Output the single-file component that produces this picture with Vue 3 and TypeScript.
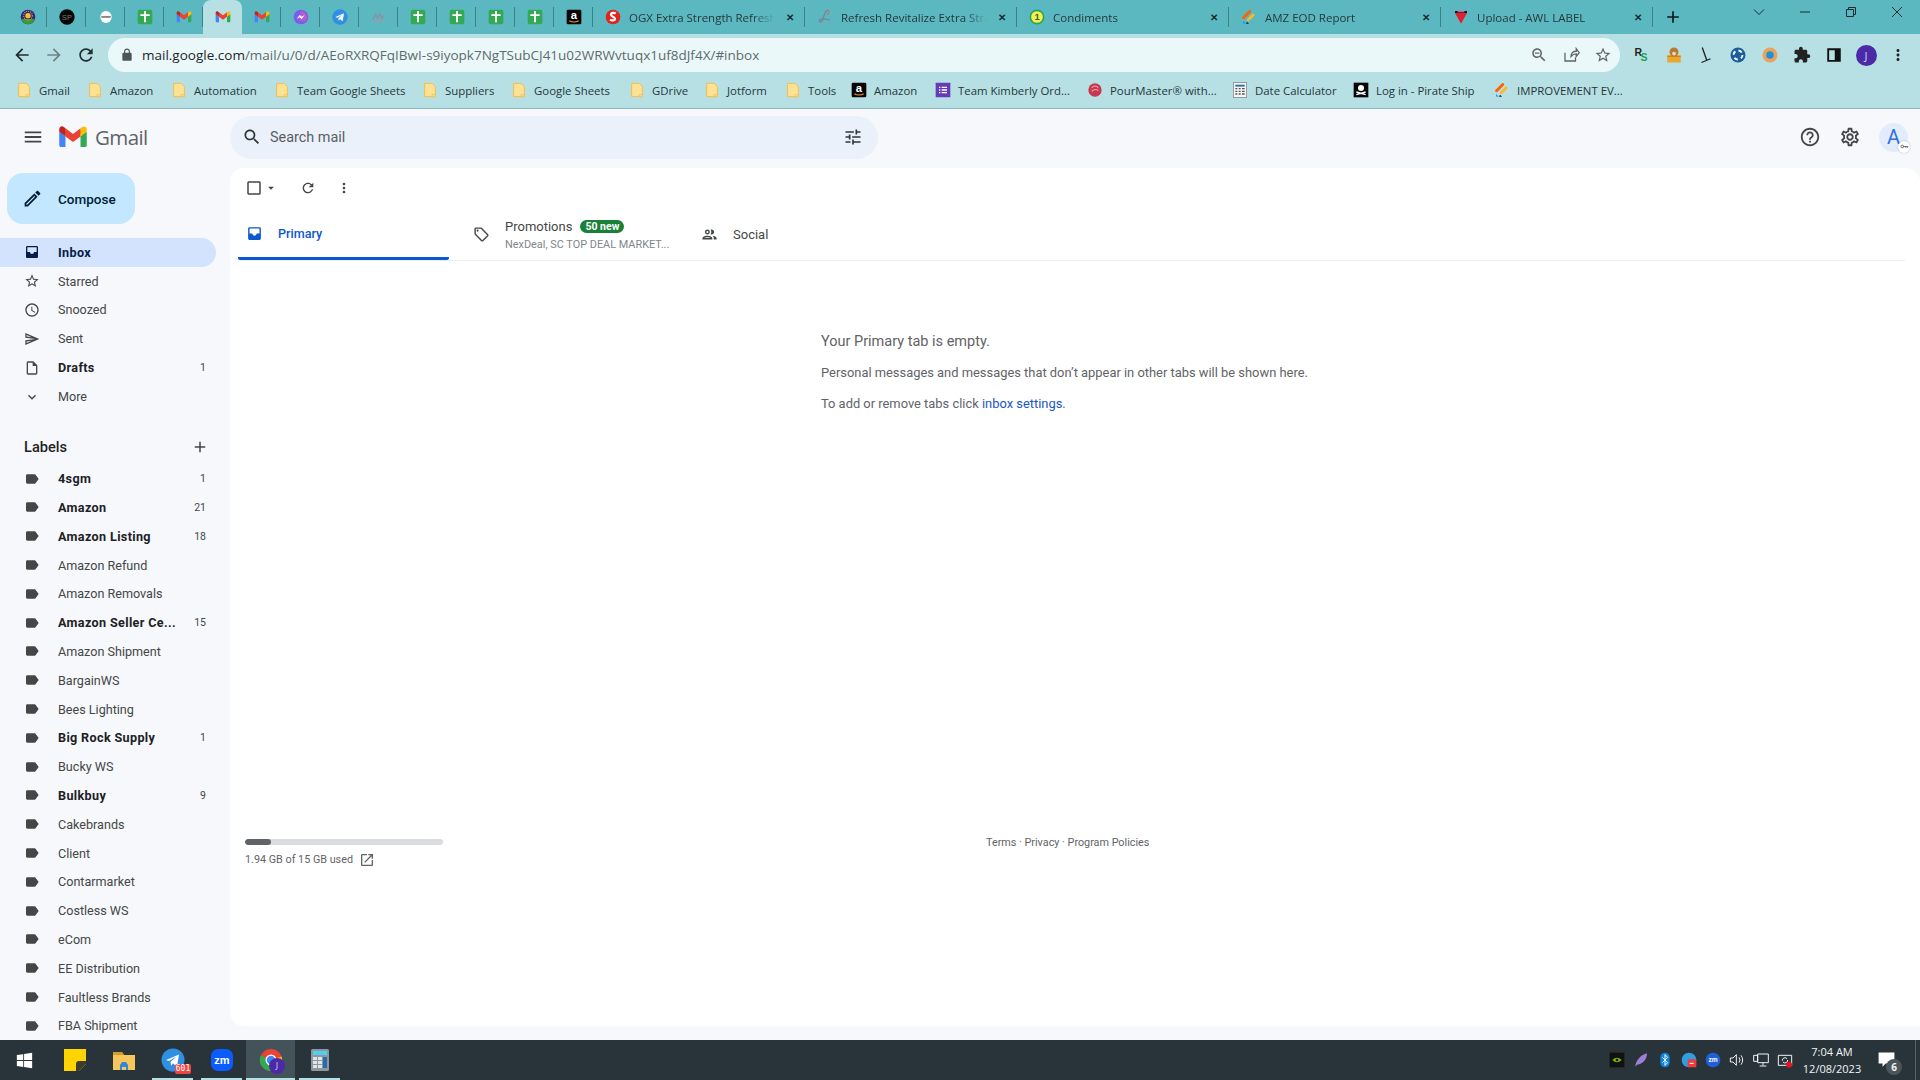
<script setup lang="ts">
const glyphs: Record<string, string> = {
  sheets: '<rect x="1" y="1" width="22" height="22" rx="3" fill="#34a853"/><path d="M5 8h14v2.4h-5.6V20h-2.8v-9.6H5z" fill="#fff"/><path d="M10.600 3h2.800v6h-2.800z" fill="#fff"/>',
  gmail: '<g transform="translate(1 3.500) scale(.086)"><path fill="#4285F4" d="M58.182 192.050V93.140L27.507 65.077 0 49.504v125.091c0 9.658 7.825 17.455 17.455 17.455h40.727Z"/><path fill="#34A853" d="M197.818 192.050h40.727c9.659 0 17.455-7.826 17.455-17.455V49.505l-31.156 17.837-27.026 25.798v98.910Z"/><path fill="#EA4335" d="m58.182 93.140-4.174-38.647 4.174-36.989L128 69.868l69.818-52.364 4.669 34.992-4.669 40.644L128 145.504z"/><path fill="#FBBC04" d="M197.818 17.504V93.140L256 49.504V26.231c0-21.585-24.640-33.890-41.890-20.945l-16.292 12.218Z"/><path fill="#C5221F" d="m0 49.504 26.759 20.070L58.182 93.140V17.504L41.890 5.286C24.610-7.660 0 4.646 0 26.230v23.273Z"/></g>',
  sun: '<circle cx="12" cy="12" r="11" fill="#2c2a7a"/><path d="M1.500 15a11 11 0 0 0 21 0z" fill="#3d9a3a"/><circle cx="12" cy="10" r="4" fill="#f2c230"/><circle cx="12" cy="10" r="6.500" fill="none" stroke="#e8862e" stroke-dasharray="1.500 1.500" stroke-width="2"/>',
  sp: '<circle cx="12" cy="12" r="11.500" fill="#060606"/><text x="12" y="16" font-size="11" text-anchor="middle" fill="#777" font-family="Liberation Sans">SP</text>',
  pill: '<ellipse cx="12" cy="12" rx="8.500" ry="9" fill="#fff"/><rect x="5" y="10.800" width="14" height="2.200" fill="#666"/>',
  messenger: '<circle cx="12" cy="12" r="11" fill="#7a5cf0"/><path d="M12 3a9 9 0 0 1 9 9 9 9 0 0 1-4 7l-9-2z" fill="#e85ca8" opacity=".55"/><path d="M5.500 15l4.500-6 3 2.500 4.500-2.500-4.500 6-3-2.500z" fill="#fff"/>',
  telegram: '<circle cx="12" cy="12" r="11.500" fill="#2f8fe0"/><path d="M5 12l13-5.500-2 12-4-3-2 2-.5-3.500 6-5.500-7.500 4.500z" fill="#fff"/>',
  faint: '<path d="M3 16l4-8 3 6 3-7 3 8 4-6" fill="none" stroke="#8795ab" stroke-width="2.400"/><path d="M4 19h16" stroke="#c58a9a" stroke-width="1.500"/>',
  amazon: '<rect x="1" y="1" width="22" height="22" rx="2" fill="#060606"/><text x="12" y="15.500" font-size="17" font-weight="700" text-anchor="middle" fill="#fff" font-family="Liberation Sans">a</text><path d="M5 17.500q7 4 14 0" fill="none" stroke="#f59a23" stroke-width="1.800"/>',
  safeway: '<circle cx="12" cy="12" r="11" fill="#e2231a"/><path d="M16 7c-2-2-7-1.500-7 1.500s6 3 6 6-4.500 3.500-7.500 1.500" fill="none" stroke="#fff" stroke-width="3.400"/>',
  script: '<path d="M15 2c-4 3-5 11-7 15-1 3-5 3-4.500 0s9.500-3 15.500 0" fill="none" stroke="#76858e" stroke-width="2"/><path d="M15 2c3.500-1 3.500 5 0 7" fill="none" stroke="#b8736f" stroke-width="2"/><path d="M9 21h9" stroke="#6fb0b8" stroke-width="1.600"/>',
  one: '<circle cx="12" cy="12" r="10" fill="#f8ee4d" stroke="#1fa85a" stroke-width="2.400"/><text x="12" y="17" font-size="14" font-weight="700" text-anchor="middle" fill="#236b35" font-family="Liberation Sans">1</text>',
  jot: '<path d="M2 12L12 2c1.500-1.500 4.500 1.500 3 3L5 15c-1.500 1.500-4.500-1.500-3-3z" fill="#ff6100"/><path d="M9 15l8-8c1.500-1.500 4.500 1.500 3 3l-8 8c-1.500 1.500-4.500-1.500-3-3z" fill="#ffb629"/><path d="M3 18l4 4H4.500C3.500 22 3 21 3 20z" fill="#0099ff"/><path d="M9 19l3 3H7.500z" fill="#0a1551"/>',
  awl: '<path d="M3 6h18l-9 16z" fill="#e0202c"/><path d="M3 3h18v3H3z" fill="#1a1a1a"/><path d="M7 3h10v2H7z" fill="#e84fa0"/>',
  folder: '<path d="M4 2h11l5 5v15H4z" fill="#fde293" stroke="#f0bd4f" stroke-width="1.500"/><path d="M15 19h5v3h-5z" fill="#fde293" stroke="#f0bd4f"/>',
  form: '<rect x="1" y="1" width="22" height="22" rx="1" fill="#673ab7"/><path d="M6 7h2v2H6zM10 7h8v2h-8zM6 11h2v2H6zM10 11h8v2h-8zM6 15h2v2H6zM10 15h8v2h-8z" fill="#fff"/>',
  pour: '<circle cx="12" cy="12" r="10" fill="#c8374f"/><path d="M7 9q5-6 10 0M7 14q5-5 10-1" fill="none" stroke="#f1a3ae" stroke-width="1.600"/>',
  calc: '<rect x="2" y="1" width="20" height="22" fill="#f5f5f5" stroke="#777"/><path d="M5 4h14v3H5z" fill="#3a6ea5"/><path d="M5 9h3v2H5zM10 9h3v2h-3zM15 9h4v2h-4zM5 13h3v2H5zM10 13h3v2h-3zM15 13h4v2h-4zM5 17h3v2H5zM10 17h3v2h-3zM15 17h4v2h-4z" fill="#555"/>',
  pirate: '<rect x="1" y="1" width="22" height="22" fill="#050505"/><circle cx="12" cy="9" r="4.500" fill="#fff"/><path d="M5 15l14 4M19 15L5 19" stroke="#fff" stroke-width="2"/>'
}

const pinned = ['sun', 'sp', 'pill', 'sheets', 'gmail', 'gmail', 'gmail', 'messenger', 'telegram', 'faint', 'sheets', 'sheets', 'sheets', 'sheets', 'amazon']
const openTabs = [
  { title: 'OGX Extra Strength Refresh', icon: 'safeway' },
  { title: 'Refresh Revitalize Extra Stre', icon: 'script' },
  { title: 'Condiments', icon: 'one' },
  { title: 'AMZ EOD Report', icon: 'jot' },
  { title: 'Upload - AWL LABEL', icon: 'awl' }
]
const bookmarks = [
  { text: 'Gmail', icon: 'folder', w: 71 },
  { text: 'Amazon', icon: 'folder', w: 84 },
  { text: 'Automation', icon: 'folder', w: 103 },
  { text: 'Team Google Sheets', icon: 'folder', w: 148 },
  { text: 'Suppliers', icon: 'folder', w: 89 },
  { text: 'Google Sheets', icon: 'folder', w: 118 },
  { text: 'GDrive', icon: 'folder', w: 75 },
  { text: 'Jotform', icon: 'folder', w: 81 },
  { text: 'Tools', icon: 'folder', w: 66 },
  { text: 'Amazon', icon: 'amazon', w: 84 },
  { text: 'Team Kimberly Ord...', icon: 'form', w: 152 },
  { text: 'PourMaster® with...', icon: 'pour', w: 145 },
  { text: 'Date Calculator', icon: 'calc', w: 121 },
  { text: 'Log in - Pirate Ship', icon: 'pirate', w: 141 },
  { text: 'IMPROVEMENT EV...', icon: 'jot', w: 160 }
]

const paths = {
  menu: 'M3 18h18v-2H3v2zm0-5h18v-2H3v2zm0-7v2h18V6H3z',
  search: 'M15.500 14h-.79l-.28-.27C15.410 12.590 16 11.110 16 9.500 16 5.910 13.090 3 9.500 3S3 5.910 3 9.500 5.910 16 9.500 16c1.610 0 3.090-.59 4.230-1.570l.27.28v.79l5 4.990L20.490 19l-4.990-5zm-6 0C7.010 14 5 11.990 5 9.500S7.010 5 9.500 5 14 7.010 14 9.500 11.990 14 9.500 14z',
  tune: 'M3 17v2h6v-2H3zM3 5v2h10V5H3zm10 16v-2h8v-2h-8v-2h-2v6h2zM7 9v2H3v2h4v2h2V9H7zm14 4v-2H11v2h10zm-6-4h2V7h4V5h-4V3h-2v6z',
  help: 'M11 18h2v-2h-2v2zm1-16C6.480 2 2 6.480 2 12s4.480 10 10 10 10-4.480 10-10S17.520 2 12 2zm0 18c-4.410 0-8-3.590-8-8s3.590-8 8-8 8 3.590 8 8-3.590 8-8 8zm0-14c-2.210 0-4 1.790-4 4h2c0-1.100.9-2 2-2s2 .9 2 2c0 2-3 1.750-3 5h2c0-2.250 3-2.500 3-5 0-2.210-1.790-4-4-4z',
  gear: 'M19.430 12.980c.04-.32.07-.64.07-.98 0-.34-.03-.66-.07-.98l2.110-1.650c.19-.15.24-.42.12-.64l-2-3.460c-.09-.16-.26-.25-.44-.25-.06 0-.12.01-.17.03l-2.490 1c-.52-.4-1.080-.73-1.690-.98l-.38-2.650C14.460 2.180 14.250 2 14 2h-4c-.25 0-.46.18-.49.42l-.38 2.650c-.61.25-1.170.59-1.690.98l-2.490-1c-.06-.02-.12-.03-.18-.03-.17 0-.34.09-.43.25l-2 3.460c-.13.22-.07.49.12.64l2.110 1.650c-.04.32-.07.65-.07.98 0 .33.03.66.07.98l-2.110 1.650c-.19.15-.24.42-.12.64l2 3.460c.09.16.26.25.44.25.06 0 .12-.01.17-.03l2.490-1c.52.4 1.080.73 1.690.98l.38 2.650c.03.24.24.42.49.42h4c.25 0 .46-.18.49-.42l.38-2.650c.61-.25 1.170-.59 1.690-.98l2.490 1c.06.02.12.03.18.03.17 0 .34-.09.43-.25l2-3.460c.12-.22.07-.49-.12-.64l-2.110-1.650zm-1.980-1.710c.04.31.05.52.05.73 0 .21-.02.43-.05.73l-.14 1.130.89.7 1.080.84-.7 1.210-1.270-.51-1.040-.42-.9.68c-.43.32-.84.56-1.250.73l-1.060.43-.16 1.130-.2 1.350h-1.400l-.19-1.350-.16-1.130-1.060-.43c-.43-.18-.83-.41-1.230-.71l-.91-.7-1.060.43-1.270.51-.7-1.210 1.080-.84.89-.7-.14-1.130c-.03-.31-.05-.54-.05-.74s.02-.43.05-.73l.14-1.130-.89-.7-1.080-.84.7-1.210 1.270.51 1.040.42.9-.68c.43-.32.84-.56 1.250-.73l1.060-.43.16-1.130.2-1.350h1.390l.19 1.350.16 1.130 1.060.43c.43.18.83.41 1.230.71l.91.7 1.060-.43 1.270-.51.7 1.210-1.070.85-.89.7.14 1.130zM12 8c-2.210 0-4 1.790-4 4s1.790 4 4 4 4-1.790 4-4-1.790-4-4-4zm0 6c-1.100 0-2-.9-2-2s.9-2 2-2 2 .9 2 2-.9 2-2 2z',
  edit: 'M3 17.250V21h3.750L17.810 9.940l-3.750-3.750L3 17.250zM5.920 19H5v-.92l9.060-9.060.92.92L5.920 19zM20.710 5.630l-2.340-2.340c-.2-.2-.45-.29-.71-.29s-.51.1-.7.29l-1.830 1.830 3.750 3.750 1.830-1.830c.39-.39.39-1.020 0-1.410z',
  inbox: 'M19 3H5c-1.100 0-2 .9-2 2v14c0 1.100.9 2 2 2h14c1.100 0 2-.9 2-2V5c0-1.100-.9-2-2-2zm0 9h-4c0 1.660-1.340 3-3 3s-3-1.340-3-3H5V5h14v7z',
  star: 'M22 9.240l-7.190-.62L12 2 9.190 8.630 2 9.240l5.460 4.730L5.820 21 12 17.270 18.180 21l-1.630-7.030L22 9.240zM12 15.400l-3.760 2.270 1-4.280-3.320-2.880 4.380-.38L12 6.100l1.710 4.040 4.380.38-3.320 2.880 1 4.280L12 15.400z',
  clock: 'M11.990 2C6.470 2 2 6.480 2 12s4.470 10 9.990 10C17.520 22 22 17.520 22 12S17.520 2 11.990 2zM12 20c-4.420 0-8-3.580-8-8s3.580-8 8-8 8 3.580 8 8-3.580 8-8 8zm.5-13H11v6l5.250 3.150.75-1.230-4.500-2.670z',
  send: 'M4.010 6.030l7.510 3.220-7.520-1 .01-2.220m7.500 8.720L4 17.970v-2.220l7.510-1M2.010 3L2 10l15 2-15 2 .01 7L23 12 2.010 3z',
  draft: 'M14 2H6c-1.100 0-1.990.9-1.990 2L4 20c0 1.100.89 2 1.990 2H18c1.100 0 2-.9 2-2V8l-6-6zM6 20V4h7v5h5v11H6z',
  down: 'M16.590 8.590L12 13.170 7.410 8.590 6 10l6 6 6-6z',
  add: 'M19 13h-6v6h-2v-6H5v-2h6V5h2v6h6v2z',
  label: 'M17.630 5.840C17.270 5.330 16.670 5 16 5L5 5.010C3.900 5.010 3 5.900 3 7v10c0 1.100.9 1.990 2 1.990L16 19c.67 0 1.270-.33 1.630-.84L22 12l-4.370-6.160z',
  box: 'M19 5v14H5V5h14m0-2H5c-1.100 0-2 .9-2 2v14c0 1.100.9 2 2 2h14c1.100 0 2-.9 2-2V5c0-1.100-.9-2-2-2z',
  caret: 'M7 10l5 5 5-5z',
  refresh: 'M17.650 6.350C16.200 4.900 14.210 4 12 4c-4.420 0-7.990 3.580-7.990 8s3.570 8 7.990 8c3.730 0 6.840-2.550 7.730-6h-2.080c-.82 2.330-3.040 4-5.650 4-3.310 0-6-2.690-6-6s2.690-6 6-6c1.660 0 3.140.69 4.220 1.780L13 11h7V4l-2.350 2.350z',
  more: 'M12 8c1.100 0 2-.9 2-2s-.9-2-2-2-2 .9-2 2 .9 2 2 2zm0 2c-1.100 0-2 .9-2 2s.9 2 2 2 2-.9 2-2-.9-2-2-2zm0 6c-1.100 0-2 .9-2 2s.9 2 2 2 2-.9 2-2-.9-2-2-2z',
  tag: 'M21.410 11.580l-9-9C12.050 2.220 11.550 2 11 2H4c-1.100 0-2 .9-2 2v7c0 .55.22 1.050.59 1.420l9 9c.36.36.86.58 1.410.58s1.050-.22 1.410-.59l7-7c.37-.36.59-.86.59-1.410s-.23-1.060-.59-1.420zM13 20.010L4 11V4h7v-.01l9 9-7 7.020zM6.500 5a1.500 1.500 0 1 0 0 3 1.500 1.500 0 0 0 0-3z',
  people: 'M9 13.750c-2.340 0-7 1.170-7 3.500V19h14v-1.750c0-2.330-4.660-3.500-7-3.500zM4.340 17c.84-.58 2.870-1.250 4.660-1.250s3.820.67 4.660 1.250H4.340zM9 12c1.930 0 3.500-1.570 3.500-3.500S10.930 5 9 5 5.500 6.570 5.500 8.500 7.070 12 9 12zm0-5c.83 0 1.500.67 1.500 1.500S9.830 10 9 10s-1.500-.67-1.500-1.500S8.170 7 9 7zm7.040 6.810c1.160.84 1.960 1.960 1.960 3.440V19h4v-1.750c0-2.020-3.500-3.170-5.960-3.440zM15 12c1.930 0 3.500-1.570 3.500-3.500S16.930 5 15 5c-.54 0-1.040.13-1.500.35.63.89 1 1.980 1 3.150s-.37 2.260-1 3.150c.46.22.96.35 1.500.35z',
  open: 'M19 19H5V5h7V3H5c-1.110 0-2 .9-2 2v14c0 1.100.89 2 2 2h14c1.100 0 2-.9 2-2v-7h-2v7zM14 3v2h3.590l-9.830 9.830 1.410 1.410L19 6.410V10h2V3h-7z',
  back: 'M20 11H7.830l5.590-5.590L12 4l-8 8 8 8 1.410-1.410L7.830 13H20v-2z',
  forward: 'M12 4l-1.410 1.410L16.170 11H4v2h12.170l-5.580 5.590L12 20l8-8z',
  lock: 'M18 8h-1V6c0-2.760-2.240-5-5-5S7 3.240 7 6v2H6c-1.100 0-2 .9-2 2v10c0 1.100.9 2 2 2h12c1.100 0 2-.9 2-2V10c0-1.100-.9-2-2-2zM9 6c0-1.660 1.340-3 3-3s3 1.340 3 3v2H9V6z',
  puzzle: 'M20.500 11H19V7c0-1.100-.9-2-2-2h-4V3.500C13 2.120 11.880 1 10.500 1S8 2.120 8 3.500V5H4c-1.100 0-1.990.9-1.990 2v3.800H3.500c1.490 0 2.700 1.210 2.700 2.700s-1.210 2.700-2.700 2.700H2V20c0 1.100.9 2 2 2h3.800v-1.500c0-1.490 1.210-2.700 2.700-2.700 1.490 0 2.700 1.210 2.700 2.700V22H17c1.100 0 2-.9 2-2v-4h1.500c1.380 0 2.500-1.120 2.500-2.500S21.880 11 20.500 11z'
}

const navItems = [
  { text: 'Inbox', icon: paths.inbox, active: true },
  { text: 'Starred', icon: paths.star },
  { text: 'Snoozed', icon: paths.clock },
  { text: 'Sent', icon: paths.send },
  { text: 'Drafts', icon: paths.draft, count: 1 },
  { text: 'More', icon: paths.down, muted: true }
]
const labels: { text: string; count?: number }[] = [
  { text: '4sgm', count: 1 },
  { text: 'Amazon', count: 21 },
  { text: 'Amazon Listing', count: 18 },
  { text: 'Amazon Refund' },
  { text: 'Amazon Removals' },
  { text: 'Amazon Seller Ce...', count: 15 },
  { text: 'Amazon Shipment' },
  { text: 'BargainWS' },
  { text: 'Bees Lighting' },
  { text: 'Big Rock Supply', count: 1 },
  { text: 'Bucky WS' },
  { text: 'Bulkbuy', count: 9 },
  { text: 'Cakebrands' },
  { text: 'Client' },
  { text: 'Contarmarket' },
  { text: 'Costless WS' },
  { text: 'eCom' },
  { text: 'EE Distribution' },
  { text: 'Faultless Brands' },
  { text: 'FBA Shipment' }
]
const storagePct = (1.94 / 15) * 100
</script>

<template>
  <div class="screen">
    <div class="tabstrip">
      <div v-for="(p, i) in pinned" :key="i" class="pin" :class="{ 'pin-on': i === 5 }">
        <svg class="fav" viewBox="0 0 24 24" v-html="glyphs[p]"></svg>
      </div>
      <div v-for="t in openTabs" :key="t.title" class="tab">
        <svg class="fav" viewBox="0 0 24 24" v-html="glyphs[t.icon]"></svg>
        <span class="tab-title">{{ t.title }}</span>
        <span class="tab-x">✕</span>
      </div>
      <svg class="newtab" viewBox="0 0 24 24"><path :d="paths.add" /></svg>
      <div class="winctl">
        <svg class="wc" viewBox="0 0 12 12"><path d="M1 3.500l5 5 5-5" /></svg>
        <svg class="wc" viewBox="0 0 12 12"><path d="M1 6h10" /></svg>
        <svg class="wc" viewBox="0 0 12 12"><path d="M1.500 3.500h7v7h-7zM3.500 3.500v-2h7v7h-2" /></svg>
        <svg class="wc" viewBox="0 0 12 12"><path d="M1 1l10 10M11 1L1 11" /></svg>
      </div>
    </div>

    <div class="toolbar">
      <button class="tb"><svg viewBox="0 0 24 24"><path :d="paths.back" /></svg></button>
      <button class="tb dim"><svg viewBox="0 0 24 24"><path :d="paths.forward" /></svg></button>
      <button class="tb"><svg viewBox="0 0 24 24"><path :d="paths.refresh" /></svg></button>
      <div class="omni">
        <svg class="lock" viewBox="0 0 24 24"><path :d="paths.lock" /></svg>
        <span class="url"><b>mail.google.com</b>/mail/u/0/d/AEoRXRQFqIBwI-s9iyopk7NgTSubCJ41u02WRWvtuqx1uf8dJf4X/#inbox</span>
        <svg class="omni-i" viewBox="0 0 24 24"><path :d="paths.search" /><path d="M6.500 8.700h6v1.600h-6z" /></svg>
        <svg class="omni-i" viewBox="0 0 24 24"><path d="M4 9v11h14v-5M12 14c0-5 3-7 7-7V3.500l4 5.500-4 5v-3.500c-3 0-5 1-7 3.500z" fill="none" stroke="#5f6368" stroke-width="1.700" /></svg>
        <svg class="omni-i" viewBox="0 0 24 24"><path :d="paths.star" /></svg>
      </div>
      <div class="exts">
        <span class="ext">
          <svg viewBox="0 0 24 24"><text x="2" y="13" font-size="14" font-weight="700" fill="#222" font-family="Liberation Sans">R</text><text x="10" y="20" font-size="14" font-weight="700" fill="#1e9e5a" font-family="Liberation Sans">S</text></svg>
        </span>
        <span class="ext">
          <svg viewBox="0 0 24 24"><path d="M3 12h18v10H3z" fill="#e9a72c" /><circle cx="12" cy="8" r="6" fill="#b87a3c" /><circle cx="12" cy="10" r="2.500" fill="#f3d9ae" /><path d="M3 14h18" stroke="#b97e14" /></svg>
        </span>
        <span class="ext">
          <svg viewBox="0 0 24 24"><path d="M7 2l6 17M6 22l12-5" fill="none" stroke="#222" stroke-width="1.800" /></svg>
        </span>
        <span class="ext">
          <svg viewBox="0 0 24 24"><circle cx="12" cy="12" r="10" fill="#1a5e9c" /><circle cx="12" cy="12" r="6" fill="none" stroke="#fff" stroke-width="2.500" stroke-dasharray="5 4.400" /></svg>
        </span>
        <span class="ext">
          <svg viewBox="0 0 24 24"><circle cx="12" cy="12" r="10" fill="#eea15c" /><circle cx="12" cy="12" r="5" fill="#1c93d8" /></svg>
        </span>
        <span class="ext"><svg viewBox="0 0 24 24"><path :d="paths.puzzle" fill="#222" /></svg></span>
        <span class="ext">
          <svg viewBox="0 0 24 24"><path d="M3 3h18v18H3zM5.500 5.500v13H13v-13z" fill="#111" fill-rule="evenodd" /></svg>
        </span>
        <span class="ext"><span class="avatar-j">J</span></span>
        <span class="ext"><svg viewBox="0 0 24 24"><path :d="paths.more" fill="#222" /></svg></span>
      </div>
    </div>

    <div class="bookmarks">
      <div v-for="(b, i) in bookmarks" :key="i" class="bm" :style="{ width: b.w + 'px' }">
        <svg class="fav" viewBox="0 0 24 24" v-html="glyphs[b.icon]"></svg>
        <span>{{ b.text }}</span>
      </div>
    </div>

    <div class="gmail">
      <header class="gm-head">
        <div class="brand">
          <svg class="gi burger" viewBox="0 0 24 24"><path :d="paths.menu" /></svg>
          <svg class="m-logo" viewBox="0 0 24 24" v-html="glyphs.gmail"></svg>
          <span class="wordmark">Gmail</span>
        </div>
        <div class="search">
          <svg class="gi dark" viewBox="0 0 24 24"><path :d="paths.search" /></svg>
          <span class="placeholder">Search mail</span>
          <svg class="gi dark push" viewBox="0 0 24 24"><path :d="paths.tune" /></svg>
        </div>
        <div class="head-right">
          <svg class="gi big" viewBox="0 0 24 24"><path :d="paths.help" /></svg>
          <svg class="gi big" viewBox="0 0 24 24"><path :d="paths.gear" /></svg>
          <div class="acct">
            A
            <span class="key">
              <svg viewBox="0 0 24 12"><circle cx="6" cy="6" r="3.500" fill="none" stroke="#444" stroke-width="2" /><path d="M9 5h13v2h-2v3h-2V7h-2v2h-2V7H9z" fill="#444" /></svg>
            </span>
          </div>
        </div>
      </header>

      <div class="gm-body">
        <nav class="side">
          <button class="compose">
            <svg class="gi compose-i" viewBox="0 0 24 24"><path :d="paths.edit" /></svg>
            Compose
          </button>
          <ul class="nav">
            <li
              v-for="n in navItems"
              :key="n.text"
              class="row"
              :class="{ on: n.active, strong: n.count, muted: n.muted }"
            >
              <svg class="gi" viewBox="0 0 24 24"><path :d="n.icon" /></svg>
              <span class="row-text">{{ n.text }}</span>
              <span v-if="n.count" class="count">{{ n.count }}</span>
            </li>
          </ul>
          <div class="labels-head">
            <span>Labels</span>
            <svg class="gi" viewBox="0 0 24 24"><path :d="paths.add" /></svg>
          </div>
          <ul class="nav labels">
            <li v-for="l in labels" :key="l.text" class="row" :class="{ strong: l.count }">
              <svg class="gi" viewBox="0 0 24 24"><path :d="paths.label" /></svg>
              <span class="row-text">{{ l.text }}</span>
              <span v-if="l.count" class="count">{{ l.count }}</span>
            </li>
          </ul>
        </nav>

        <main class="card">
          <div class="actions">
            <svg class="gi" viewBox="0 0 24 24"><path :d="paths.box" /></svg>
            <svg class="caret" viewBox="0 0 24 24"><path :d="paths.caret" /></svg>
            <svg class="gi act-gap" viewBox="0 0 24 24"><path :d="paths.refresh" /></svg>
            <svg class="gi act-gap2" viewBox="0 0 24 24"><path :d="paths.more" /></svg>
          </div>

          <div class="cats">
            <div class="cat cat-on">
              <svg class="gi" viewBox="0 0 24 24"><path :d="paths.inbox" /></svg>
              <span>Primary</span>
            </div>
            <div class="cat cat-promo">
              <svg class="gi" viewBox="0 0 24 24"><path :d="paths.tag" /></svg>
              <div class="cat-two">
                <div class="cat-line">
                  <span>Promotions</span><span class="badge">50 new</span>
                </div>
                <div class="cat-sub">NexDeal, SC TOP DEAL MARKET...</div>
              </div>
            </div>
            <div class="cat cat-social">
              <svg class="gi" viewBox="0 0 24 24"><path :d="paths.people" /></svg>
              <span>Social</span>
            </div>
          </div>

          <div class="empty">
            <h2>Your Primary tab is empty.</h2>
            <p>Personal messages and messages that don’t appear in other tabs will be shown here.</p>
            <p>To add or remove tabs click <a>inbox settings</a>.</p>
          </div>

          <footer class="foot">
            <div class="storage">
              <div class="track"><div class="fill" :style="{ width: storagePct + '%' }"></div></div>
              <div class="used">
                1.94 GB of 15 GB used
                <svg viewBox="0 0 24 24"><path :d="paths.open" /></svg>
              </div>
            </div>
            <div class="terms">Terms · Privacy · Program Policies</div>
          </footer>
        </main>
      </div>
    </div>

    <div class="taskbar">
      <svg class="win" viewBox="0 0 20 20"><path d="M1 3.500l7.500-1v7H1zM9.500 2.300L19 1v8.500H9.500zM1 10.500h7.500v7l-7.500-1zM9.500 10.500H19V19l-9.500-1.300z" fill="#fff" /></svg>
      <div class="apps">
        <span class="app">
          <svg viewBox="0 0 24 24"><path d="M1 1h22v15l-7 7H1z" fill="#ffd400" /><path d="M23 13v3l-7 7h-3v-7a3 3 0 0 1 3-3z" fill="#3d3d2f" /></svg>
        </span>
        <span class="app">
          <svg viewBox="0 0 24 24"><path d="M1 4h9l2 3h11v15H1z" fill="#f6c55c" /><path d="M1 4h9l2 3H1z" fill="#d39a2c" /><path d="M8 22v-5l2-3h4l2 3v5h-2v-3h-4v3z" fill="#2f88d8" /></svg>
        </span>
        <span class="app open">
          <svg viewBox="0 0 24 24" v-html="glyphs.telegram"></svg>
          <span class="tg-badge">601</span>
        </span>
        <span class="app open">
          <svg viewBox="0 0 24 24"><rect x="1" y="1" width="22" height="22" rx="7" fill="#0b5cff" /><text x="12" y="16" font-size="11" font-weight="700" text-anchor="middle" fill="#fff" font-family="Liberation Sans">zm</text></svg>
        </span>
        <span class="app open current">
          <svg viewBox="0 0 24 24">
            <circle cx="12" cy="12" r="11" fill="#ea4335" />
            <path d="M12 12L22.500 8.500A11 11 0 0 1 12 23z" fill="#fbbc04" />
            <path d="M12 12L12 23A11 11 0 0 1 1.800 7.500z" fill="#34a853" />
            <circle cx="12" cy="12" r="5.500" fill="#fff" />
            <circle cx="12" cy="12" r="4.200" fill="#4285f4" />
          </svg>
          <span class="chrome-j">J</span>
        </span>
        <span class="app open">
          <svg viewBox="0 0 24 24"><rect x="3" y="1" width="18" height="22" rx="1.500" fill="#8e979c" /><path d="M5 3h14v4H5z" fill="#4fd0f0" /><path d="M5 9h4v3H5zM10 9h4v3h-4zM5 13h4v3H5zM10 13h4v3h-4zM5 17h4v3H5zM10 17h4v3h-4z" fill="#dfe5e8" /><path d="M15 9h4v11h-4z" fill="#2a6aa8" /></svg>
        </span>
      </div>
      <div class="tray">
        <span class="t-ic"><svg viewBox="0 0 24 24"><rect x="1" y="1" width="22" height="22" fill="#111" /><path d="M5 12q7-7 14 0-7 7-14 0z" fill="#76b900" /><circle cx="12" cy="12" r="2" fill="#111" /></svg></span>
        <span class="t-ic"><svg viewBox="0 0 24 24"><path d="M3 22C5 12 12 4 21 2c0 9-6 16-15 17z" fill="#9f7fd6" /></svg></span>
        <span class="t-ic"><svg viewBox="0 0 24 24"><rect x="5" y="1" width="14" height="22" rx="7" fill="#0a84e0" /><path d="M8 8l8 8-4 4V4l4 4-8 8" fill="none" stroke="#fff" stroke-width="1.500" /></svg></span>
        <span class="t-ic">
          <svg viewBox="0 0 24 24"><circle cx="12" cy="12" r="11" fill="#2f9fe0" /><rect x="10" y="11" width="13" height="12" rx="1" fill="#ef3b3b" /><path d="M13 17h6" stroke="#fff" stroke-width="1.500" /></svg>
        </span>
        <span class="t-ic"><svg viewBox="0 0 24 24"><circle cx="12" cy="12" r="11" fill="#1f5fd8" /><text x="12" y="15.500" font-size="10" font-weight="700" text-anchor="middle" fill="#fff" font-family="Liberation Sans">zm</text></svg></span>
        <span class="t-ic"><svg viewBox="0 0 24 24"><path d="M2 9h4l5-5v16l-5-5H2zM15 8q3 4 0 8M18 5q5 7 0 14" fill="none" stroke="#fff" stroke-width="1.400" /></svg></span>
        <span class="t-ic"><svg viewBox="0 0 24 24"><path d="M1 5h6v9H1zM7 3h16v13H7zM15 16v4M10 21h10" fill="none" stroke="#fff" stroke-width="1.400" /></svg></span>
        <span class="t-ic">
          <svg viewBox="0 0 24 24"><path d="M2 5h20v15H2zM8 13a4 4 0 0 1 7-3M16 12a4 4 0 0 1-7 3" fill="none" stroke="#fff" stroke-width="1.400" /><circle cx="18" cy="19" r="4.500" fill="#e81123" /></svg>
        </span>
      </div>
      <div class="clock">
        <div>7:04 AM</div>
        <div>12/08/2023</div>
      </div>
      <div class="notif">
        <svg viewBox="0 0 24 24"><path d="M2 3h20v14H11l-4 4v-4H2z" fill="#fff" /></svg>
        <span class="notif-n">6</span>
      </div>
    </div>
  </div>
</template>

<style>
html,
body {
  margin: 0;
  overflow: hidden;
}
</style>

<style scoped>
.screen {
  width: 1920px;
  height: 1080px;
  display: flex;
  flex-direction: column;
  overflow: hidden;
  font-family: Roboto, "Liberation Sans", sans-serif;
  color: #444746;
}
svg {
  display: block;
  flex: none;
}
ul {
  list-style: none;
  margin: 0;
  padding: 0;
}
button {
  border: 0;
  background: none;
  padding: 0;
  font: inherit;
}

/* browser chrome */
.tabstrip {
  height: 34px;
  flex: none;
  display: flex;
  align-items: stretch;
  padding-left: 8px;
  background: #5bb8c1;
  font: 11.500px "Open Sans", "Liberation Sans", sans-serif;
  color: #27383b;
}
.fav {
  width: 16px;
  height: 16px;
}
.pin {
  width: 39px;
  display: flex;
  align-items: center;
  justify-content: center;
  position: relative;
}
.pin::after,
.tab::after {
  content: "";
  position: absolute;
  right: 0;
  top: 7px;
  height: 20px;
  width: 1px;
  background: #3f7f86;
}
.pin-on {
  background: #b7e0e4;
  border-radius: 8px 8px 0 0;
}
.pin-on::after {
  display: none;
}
.tab {
  width: 212px;
  padding: 0 8px 0 12px;
  box-sizing: border-box;
  display: flex;
  align-items: center;
  gap: 8px;
  position: relative;
}
.tab-title {
  flex: 1;
  min-width: 0;
  white-space: nowrap;
  overflow: hidden;
  -webkit-mask-image: linear-gradient(to right, #000 85%, transparent);
  mask-image: linear-gradient(to right, #000 85%, transparent);
}
.tab-x {
  width: 14px;
  font-size: 10px;
  font-weight: 700;
  text-align: center;
  color: #1d2b2e;
}
.newtab {
  width: 20px;
  height: 20px;
  margin: 7px 0 0 10px;
  fill: #10181a;
}
.winctl {
  display: flex;
  margin-left: auto;
}
.wc {
  width: 12px;
  height: 12px;
  padding: 6px 17px 16px;
  fill: none;
  stroke: #1d2b2e;
  stroke-width: 1;
}
.toolbar {
  height: 38px;
  flex: none;
  display: flex;
  align-items: center;
  padding: 4px 0 0 6px;
  box-sizing: border-box;
  background: #b7e0e4;
}
.tb {
  width: 32px;
  height: 32px;
  display: flex;
  align-items: center;
  justify-content: center;
  fill: #202c2e;
}
.tb svg {
  width: 20px;
  height: 20px;
}
.tb.dim {
  fill: #6f8285;
}
.omni {
  width: 1512px;
  height: 34px;
  margin-left: 6px;
  padding: 0 8px 0 12px;
  box-sizing: border-box;
  display: flex;
  align-items: center;
  border-radius: 17px;
  background: #ebf8f9;
  font: 13.500px "Open Sans", "Liberation Sans", sans-serif;
  color: #5d6b6e;
}
.lock {
  width: 14px;
  height: 14px;
  fill: #4c5658;
  margin-right: 8px;
}
.url {
  flex: 1;
  white-space: nowrap;
}
.url b {
  font-weight: 400;
  color: #1d2729;
}
.omni-i {
  width: 18px;
  height: 18px;
  fill: #5f6368;
  margin-left: 14px;
}
.exts {
  display: flex;
  margin-left: 6px;
}
.ext {
  width: 32px;
  display: flex;
  justify-content: center;
  align-items: center;
}
.ext svg {
  width: 18px;
  height: 18px;
}
.avatar-j {
  width: 21px;
  height: 21px;
  border-radius: 50%;
  background: #4a2aa6;
  color: #d8d2ee;
  font: 11px "Open Sans", sans-serif;
  display: flex;
  align-items: center;
  justify-content: center;
}
.bookmarks {
  height: 37px;
  flex: none;
  display: flex;
  align-items: center;
  padding-left: 16px;
  box-sizing: border-box;
  background: #b7e0e4;
  border-bottom: 1px solid #8fb6ba;
  font: 11.400px "Open Sans", "Liberation Sans", sans-serif;
  color: #26363a;
}
.bm {
  display: flex;
  align-items: center;
  gap: 7px;
  flex: none;
  white-space: nowrap;
}

/* gmail */
.gmail {
  flex: 1;
  min-height: 0;
  display: flex;
  flex-direction: column;
  background: #f6f8fc;
}
.gm-head {
  height: 59px;
  flex: none;
  display: flex;
  align-items: center;
  padding-bottom: 3px;
  box-sizing: border-box;
}
.gi {
  width: 18px;
  height: 18px;
  fill: #444746;
}
.brand {
  width: 230px;
  flex: none;
  display: flex;
  align-items: center;
  padding-left: 22px;
  box-sizing: border-box;
}
.burger {
  width: 22px;
  height: 22px;
}
.m-logo {
  width: 30px;
  height: 30px;
  margin-left: 14px;
}
.wordmark {
  margin-left: 7px;
  font: 400 20.500px "Open Sans", Roboto, sans-serif;
  letter-spacing: -0.6px;
  color: #5f6368;
}
.search {
  width: 648px;
  height: 43px;
  display: flex;
  align-items: center;
  padding: 0 15px 0 12px;
  box-sizing: border-box;
  border-radius: 22px;
  background: #eaf1fb;
}
.dark {
  width: 20px;
  height: 20px;
  fill: #303437;
}
.placeholder {
  margin-left: 8px;
  font-size: 14.400px;
  color: #5a5e61;
}
.push {
  margin-left: auto;
}
.head-right {
  margin-left: auto;
  display: flex;
  align-items: center;
  gap: 18px;
  padding-right: 12px;
}
.big {
  width: 22px;
  height: 22px;
}
.acct {
  width: 29px;
  height: 29px;
  border-radius: 50%;
  background: #e3ecfa;
  color: #2f6fe0;
  font: 400 20px Roboto, sans-serif;
  display: flex;
  align-items: center;
  justify-content: center;
  position: relative;
}
.key {
  position: absolute;
  right: -2px;
  bottom: -1px;
  width: 12px;
  height: 12px;
  border-radius: 50%;
  background: #fff;
  box-shadow: 0 0 2px rgba(0, 0, 0, 0.3);
  display: flex;
  align-items: center;
  justify-content: center;
}
.key svg {
  width: 9px;
  height: 5px;
}
.gm-body {
  flex: 1;
  min-height: 0;
  display: flex;
}
.side {
  width: 230px;
  flex: none;
  overflow: hidden;
  padding-top: 5px;
  box-sizing: border-box;
}
.compose {
  width: 128px;
  height: 51px;
  margin-left: 7px;
  display: flex;
  align-items: center;
  border-radius: 16px;
  background: #c2e7ff;
  font-size: 13.500px;
  font-weight: 500;
  color: #001d35;
}
.compose-i {
  width: 21px;
  height: 21px;
  margin: 0 15px 0 15px;
  fill: #001d35;
}
.nav {
  width: 216px;
  margin-top: 14px;
}
.row {
  height: 28.800px;
  display: flex;
  align-items: center;
  padding: 0 10px 0 24px;
  box-sizing: border-box;
  border-radius: 0 15px 15px 0;
  font-size: 12.600px;
}
.row .gi {
  width: 16px;
  height: 16px;
  margin-right: 18px;
}
.row.on {
  background: #d3e3fd;
  color: #041e49;
  font-weight: 700;
  letter-spacing: 0.35px;
}
.row.on .gi {
  fill: #041e49;
}
.row.strong {
  font-weight: 700;
  letter-spacing: 0.35px;
  color: #202124;
}
.row.muted .gi {
  margin-top: 1px;
}
.row-text {
  flex: 1;
  white-space: nowrap;
}
.count {
  font-size: 10.500px;
  font-weight: 400;
  letter-spacing: 0;
  color: #444746;
}
.labels-head {
  width: 216px;
  margin-top: 27px;
  padding: 0 7px 0 24px;
  box-sizing: border-box;
  display: flex;
  align-items: center;
  justify-content: space-between;
  font-size: 14.600px;
  font-weight: 500;
  color: #1f1f1f;
}
.labels {
  margin-top: 8.500px;
}
.card {
  flex: 1;
  min-width: 0;
  margin-bottom: 14px;
  display: flex;
  flex-direction: column;
  border-radius: 14px 14px 0 14px;
  background: #fff;
}
.actions {
  height: 41px;
  flex: none;
  display: flex;
  align-items: center;
  padding: 0 0 2px 15px;
  box-sizing: border-box;
}
.caret {
  width: 14px;
  height: 14px;
  fill: #444746;
  margin-left: 1px;
}
.act-gap {
  width: 16px;
  height: 16px;
  margin-left: 22px;
}
.act-gap2 {
  width: 16px;
  height: 16px;
  margin-left: 20px;
}
.cats {
  height: 51px;
  flex: none;
  margin: 0 15px 0 8px;
  display: flex;
  border-bottom: 1px solid #eceff1;
  font-size: 13px;
  color: #444746;
}
.cat {
  display: flex;
  align-items: center;
  box-sizing: border-box;
  height: 51px;
}
.cat .gi {
  width: 17px;
  height: 17px;
}
.cat-on {
  width: 211px;
  padding-left: 8px;
  gap: 15px;
  font-size: 12.600px;
  font-weight: 500;
  color: #0b57d0;
  border-bottom: 3px solid #0b57d0;
  border-radius: 0 0 2px 2px;
}
.cat-on .gi {
  fill: #0b57d0;
}
.cat-promo {
  width: 232px;
  padding-left: 24px;
  gap: 15px;
}
.cat-line {
  display: flex;
  align-items: center;
  gap: 8px;
}
.badge {
  height: 13px;
  line-height: 13px;
  padding: 0 5px;
  border-radius: 7px;
  background: #188038;
  color: #fff;
  font-size: 10.500px;
  font-weight: 700;
}
.cat-sub {
  margin-top: 4px;
  font-size: 10.900px;
  color: #80868b;
  white-space: nowrap;
}
.cat-social {
  padding-left: 20px;
  gap: 15px;
}
.empty {
  margin: 70px 0 0 591px;
  color: #5f6368;
  font-size: 12.900px;
}
.empty h2 {
  margin: 0 0 12.500px;
  font-size: 14.500px;
  font-weight: 400;
  line-height: 21px;
  color: #5f6368;
}
.empty p {
  margin: 0 0 16px;
  line-height: 15px;
}
.empty a {
  color: #1a56c4;
}
.foot {
  margin-top: 412px;
  padding-left: 15px;
  display: flex;
  align-items: flex-start;
  font-size: 10.800px;
  color: #5f6368;
}
.storage {
  width: 198px;
}
.track {
  height: 6px;
  border-radius: 3px;
  background: #dadce0;
  overflow: hidden;
}
.fill {
  height: 100%;
  border-radius: 3px;
  background: #5f6368;
}
.used {
  margin-top: 7px;
  display: flex;
  align-items: center;
  gap: 6px;
  white-space: nowrap;
}
.used svg {
  width: 16px;
  height: 16px;
  fill: #5f6368;
}
.terms {
  margin: -3px 0 0 543px;
}

/* windows taskbar */
.taskbar {
  height: 40px;
  flex: none;
  display: flex;
  align-items: center;
  background: #29343a;
  color: #f2f4f5;
}
.win {
  width: 17px;
  height: 17px;
  margin-left: 16px;
}
.apps {
  display: flex;
  height: 100%;
  margin-left: 17px;
}
.app {
  width: 49px;
  height: 100%;
  display: flex;
  align-items: center;
  justify-content: center;
  position: relative;
  box-sizing: border-box;
}
.app > svg {
  width: 24px;
  height: 24px;
}
.open::after {
  content: "";
  position: absolute;
  left: 4px;
  right: 4px;
  bottom: 0;
  height: 2px;
  background: #b7e0e4;
}
.current {
  background: #44535a;
}
.current::after {
  left: 0;
  right: 0;
}
.tg-badge {
  position: absolute;
  right: 6px;
  bottom: 6px;
  width: 16px;
  height: 10px;
  background: #ef4444;
  color: #fff;
  font: 8px/10px "DejaVu Sans Mono", monospace;
  text-align: center;
  border-radius: 2px;
}
.chrome-j {
  position: absolute;
  right: 10px;
  bottom: 6px;
  width: 16px;
  height: 16px;
  border-radius: 50%;
  background: #4a2aa6;
  color: #d8d2ee;
  font: 9px/16px "Open Sans", sans-serif;
  text-align: center;
}
.tray {
  display: flex;
  margin-left: auto;
  align-items: center;
}
.t-ic {
  width: 24px;
  display: flex;
  justify-content: center;
}
.t-ic svg {
  width: 16px;
  height: 16px;
}
.clock {
  width: 70px;
  text-align: center;
  font: 11px/17px "Open Sans", "Liberation Sans", sans-serif;
}
.notif {
  width: 53px;
  height: 100%;
  box-sizing: border-box;
  padding: 10px 0 0 10px;
  position: relative;
}
.notif::after {
  content: "";
  position: absolute;
  right: 4px;
  top: 0;
  bottom: 0;
  width: 1px;
  background: #56626a;
}
.notif svg {
  width: 19px;
  height: 19px;
}
.notif-n {
  position: absolute;
  left: 19px;
  top: 19px;
  width: 16px;
  height: 16px;
  border-radius: 50%;
  background: #4b565c;
  font: 700 10px/16px "Open Sans", sans-serif;
  text-align: center;
}
</style>
